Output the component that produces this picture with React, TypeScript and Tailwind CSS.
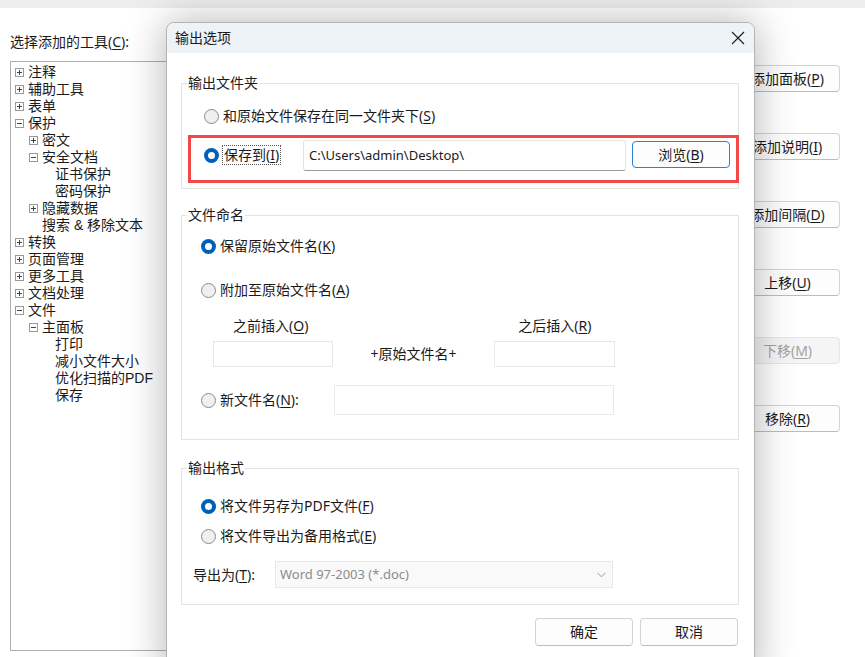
import React from "react";

type Node = { lv: 0 | 1 | 2; box?: "plus" | "minus"; t: string };

const tree: Node[] = [
  { lv: 0, box: "plus", t: "注释" },
  { lv: 0, box: "plus", t: "辅助工具" },
  { lv: 0, box: "plus", t: "表单" },
  { lv: 0, box: "minus", t: "保护" },
  { lv: 1, box: "plus", t: "密文" },
  { lv: 1, box: "minus", t: "安全文档" },
  { lv: 2, t: "证书保护" },
  { lv: 2, t: "密码保护" },
  { lv: 1, box: "plus", t: "隐藏数据" },
  { lv: 1, t: "搜索 & 移除文本" },
  { lv: 0, box: "plus", t: "转换" },
  { lv: 0, box: "plus", t: "页面管理" },
  { lv: 0, box: "plus", t: "更多工具" },
  { lv: 0, box: "plus", t: "文档处理" },
  { lv: 0, box: "minus", t: "文件" },
  { lv: 1, box: "minus", t: "主面板" },
  { lv: 2, t: "打印" },
  { lv: 2, t: "减小文件大小" },
  { lv: 2, t: "优化扫描的PDF" },
  { lv: 2, t: "保存" },
];

function TreeBox({ open }: { open: boolean }) {
  return (
    <svg width="9" height="9" viewBox="0 0 9 9" className="shrink-0">
      <rect x="0.5" y="0.5" width="8" height="8" fill="#fff" stroke="#9a9a9a" />
      <path d="M2 4.5h5" stroke="#444" />
      {!open && <path d="M4.5 2v5" stroke="#444" />}
    </svg>
  );
}

function K({ children }: { children: React.ReactNode }) {
  return <span className="underline underline-offset-[2px]">{children}</span>;
}

function Radio({ on }: { on?: boolean }) {
  return on ? (
    <span className="flex h-[15px] w-[15px] shrink-0 items-center justify-center rounded-full bg-[#005fb8]">
      <span className="h-[7px] w-[7px] rounded-full bg-white" />
    </span>
  ) : (
    <span className="h-[15px] w-[15px] shrink-0 rounded-full border border-[#8a8a8a] bg-[#efefef]" />
  );
}

function Btn({ children, className = "" }: { children: React.ReactNode; className?: string }) {
  return (
    <button
      className={`flex items-center justify-center rounded-[4px] border border-[#d3d3d3] border-b-[#bdbdbd] bg-[#fdfdfd] text-[14px] leading-[20px] text-[#1b1b1b] ${className}`}
    >
      {children}
    </button>
  );
}

export default function App() {
  return (
    <div className="relative h-[657px] w-[865px] overflow-hidden bg-white font-['Noto_Sans','Noto_Sans_CJK_SC',sans-serif] text-[14px] text-[#1b1b1b]">
      <div className="h-2 bg-[#ededed]" />

      {/* background window */}
      <div className="flex">
        <div className="pl-[10px]">
          <p className="mt-[24px] h-5 leading-[20px]">
            选择添加的工具(<K>C</K>):
          </p>
          <div className="mt-[9px] h-[590px] w-[220px] border border-[#adadad] pt-[2px] font-['Liberation_Sans','Noto_Sans_CJK_SC',sans-serif]">
            {tree.map((n, i) => (
              <div
                key={i}
                className={`flex h-[17px] items-center gap-[4px] whitespace-nowrap leading-[17px] ${
                  n.lv === 0 ? "pl-[4px]" : n.lv === 1 ? (n.box ? "pl-[18px]" : "pl-[31px]") : "pl-[44px]"
                }`}
              >
                {n.box && <TreeBox open={n.box === "minus"} />}
                <span className="leading-[17px]">{n.t}</span>
              </div>
            ))}
          </div>
        </div>

        <div className="mr-[25px] ml-auto mt-[57px] flex flex-col gap-[41px]">
          <Btn className="h-[27px] w-[105px]">
            添加面板(<K>P</K>)
          </Btn>
          <Btn className="h-[27px] w-[105px]">
            添加说明(<K>I</K>)
          </Btn>
          <Btn className="h-[27px] w-[105px]">
            添加间隔(<K>D</K>)
          </Btn>
          <Btn className="h-[27px] w-[105px]">
            上移(<K>U</K>)
          </Btn>
          <button className="flex h-[27px] w-[105px] items-center justify-center rounded-[4px] border border-[#e6e6e6] bg-[#f5f5f5] text-[14px] text-[#a2a2a2]">
            下移(<K>M</K>)
          </button>
          <Btn className="h-[27px] w-[105px]">
            移除(<K>R</K>)
          </Btn>
        </div>
      </div>

      {/* dialog */}
      <div className="absolute top-[22px] left-[166px] flex h-[660px] w-[589px] flex-col rounded-t-lg border border-[#b4b4b4] bg-white shadow-[0_0_40px_rgba(0,0,0,0.3)]">
        <div className="flex h-[30px] shrink-0 items-center justify-between rounded-t-lg bg-[#eef3f8] pr-[9px] pl-[8px]">
          <span className="leading-[20px]">输出选项</span>
          <svg width="14" height="14" viewBox="0 0 14 14">
            <path d="M1 1l12 12M13 1L1 13" stroke="#1b1b1b" strokeWidth="1.1" />
          </svg>
        </div>

        <div className="pt-[22px] pr-[15px] pl-[14px]">
          <fieldset className="border border-[#e3e3e3] pb-[5px]">
            <legend className="ml-[5px] px-[1px] leading-[16px]">输出文件夹</legend>
            <div className="mt-[15px] flex h-5 items-center gap-[4px] pl-[22px] leading-[20px]">
              <Radio />
              <span>
                和原始文件保存在同一文件夹下(<K>S</K>)
              </span>
            </div>
            <div className="mt-[9px] mr-[-1px] ml-[6px] flex h-[48px] items-start border-[3px] border-[#f24848] pt-[2px] pl-[13px]">
              <div className="mt-[5px] flex w-[99px] items-center gap-[3px]">
                <Radio on />
                <span className="border border-dotted border-[#555] px-[1px] leading-[18px]">
                  保存到(<K>I</K>)
                </span>
              </div>
              <div className="flex h-[31px] w-[323px] items-center rounded-[3px] border border-[#e5e5e5] border-b-[#9a9a9a] pl-[5px] text-[13px]">
                C:\Users\admin\Desktop\
              </div>
              <button className="mt-[1px] ml-[6px] flex h-[27px] w-[98px] items-center justify-center rounded-[4px] border border-[#2f7fd6] bg-[#fdfdfd] leading-[20px]">
                浏览(<K>B</K>)
              </button>
            </div>
          </fieldset>

          <fieldset className="mt-[18px] border border-[#e3e3e3] pb-[24px]">
            <legend className="ml-[5px] px-[1px] leading-[16px]">文件命名</legend>
            <div className="mt-[13px] flex h-5 items-center gap-[4px] pl-[19px] leading-[20px]">
              <Radio on />
              <span>
                保留原始文件名(<K>K</K>)
              </span>
            </div>
            <div className="mt-[24px] flex h-5 items-center gap-[4px] pl-[19px] leading-[20px]">
              <Radio />
              <span>
                附加至原始文件名(<K>A</K>)
              </span>
            </div>
            <div className="mt-[16px] flex h-5 leading-[20px]">
              <span className="pl-[51px]">
                之前插入(<K>O</K>)
              </span>
              <span className="pl-[210px]">
                之后插入(<K>R</K>)
              </span>
            </div>
            <div className="mt-[5px] flex items-center pl-[31px]">
              <div className="h-[26px] w-[120px] border border-[#e8e8e8]" />
              <span className="w-[161px] text-center leading-[20px]">+原始文件名+</span>
              <div className="h-[26px] w-[121px] border border-[#e8e8e8]" />
            </div>
            <div className="mt-[18px] flex items-center pl-[19px]">
              <div className="flex w-[133px] items-center gap-[4px] leading-[20px]">
                <Radio />
                <span>
                  新文件名(<K>N</K>):
                </span>
              </div>
              <div className="h-[30px] w-[280px] border border-[#e8e8e8]" />
            </div>
          </fieldset>

          <fieldset className="mt-[20px] border border-[#e3e3e3] pb-[16px]">
            <legend className="ml-[5px] px-[1px] leading-[16px]">输出格式</legend>
            <div className="mt-[20px] flex h-5 items-center gap-[4px] pl-[19px] leading-[20px]">
              <Radio on />
              <span>
                将文件另存为PDF文件(<K>F</K>)
              </span>
            </div>
            <div className="mt-[10px] flex h-5 items-center gap-[4px] pl-[19px] leading-[20px]">
              <Radio />
              <span>
                将文件导出为备用格式(<K>E</K>)
              </span>
            </div>
            <div className="mt-[15px] flex items-center pl-[11px]">
              <span className="w-[82px] leading-[20px]">
                导出为(<K>T</K>):
              </span>
              <div className="flex h-[27px] w-[338px] items-center justify-between border border-[#e8e8e8] bg-[#f9f9f9] pr-[6px] pl-[4px] text-[13px] text-[#8c8c8c]">
                <span>Word 97-2003 (*.doc)</span>
                <svg width="9" height="6" viewBox="0 0 9 6">
                  <path d="M0.5 0.8l4 4 4-4" fill="none" stroke="#9a9a9a" />
                </svg>
              </div>
            </div>
          </fieldset>

          <div className="mt-[13px] mr-[1px] flex justify-end gap-[7px]">
            <Btn className="h-[28px] w-[98px]">确定</Btn>
            <Btn className="h-[28px] w-[98px]">取消</Btn>
          </div>
        </div>
      </div>
    </div>
  );
}
